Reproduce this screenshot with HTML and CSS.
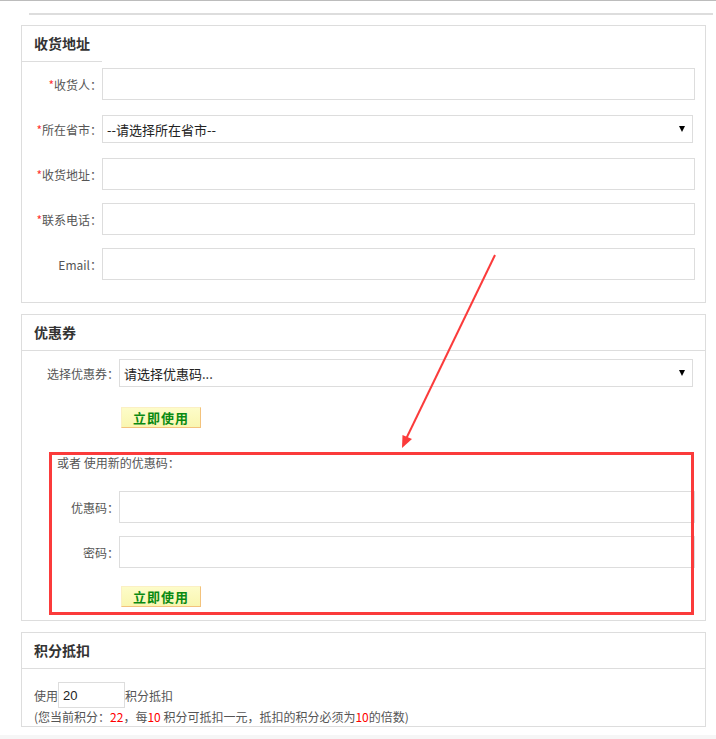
FILE: index.html
```html
<!DOCTYPE html>
<html lang="zh-CN">
<head>
    <meta charset="UTF-8">
    <meta name="viewport" content="width=device-width, initial-scale=1.0">
    <title>订单信息</title>
    <link rel="stylesheet" href="styles.css">
</head>
<body>
    <div class="rule"></div>

    <div class="panel">
        <div class="panel-hd tab"><h3>收货地址</h3></div>
        <div class="panel-bd addr">
            <div class="row">
                <label><em>*</em>收货人：</label>
                <input type="text" class="txt">
            </div>
            <div class="row">
                <label><em>*</em>所在省市：</label>
                <div class="sel-wrap">
                    <select class="sel"><option>--请选择所在省市--</option></select>
                </div>
            </div>
            <div class="row">
                <label><em>*</em>收货地址：</label>
                <input type="text" class="txt">
            </div>
            <div class="row">
                <label><em>*</em>联系电话：</label>
                <input type="text" class="txt">
            </div>
            <div class="row">
                <label>Email：</label>
                <input type="text" class="txt">
            </div>
        </div>
    </div>

    <div class="panel">
        <div class="panel-hd"><h3>优惠券</h3></div>
        <div class="panel-bd coupon">
            <div class="row short">
                <label>选择优惠券：</label>
                <div class="sel-wrap">
                    <select class="sel"><option>请选择优惠码...</option></select>
                </div>
            </div>
            <div class="btn-row"><button type="button" class="use-btn">立即使用</button></div>

            <div class="new-code">
                <p class="tip">或者 使用新的优惠码：</p>
                <div class="row">
                    <label>优惠码：</label>
                    <input type="text" class="txt">
                </div>
                <div class="row">
                    <label>密码：</label>
                    <input type="password" class="txt">
                </div>
                <div class="btn-row last"><button type="button" class="use-btn">立即使用</button></div>
            </div>
        </div>
    </div>

    <div class="panel">
        <div class="panel-hd"><h3>积分抵扣</h3></div>
        <div class="panel-bd points">
            <p class="use-line">使用<input type="text" class="pt" value="20">积分抵扣</p>
            <p class="note">(您当前积分：<span class="red">22</span>，每<span class="red">10</span> 积分可抵扣一元，抵扣的积分必须为<span class="red">10</span>的倍数)</p>
        </div>
    </div>

    <div class="foot"></div>

    <!-- 标注箭头 -->
    <svg class="arrow" width="716" height="739" viewBox="0 0 716 739">
        <line x1="495" y1="254" x2="406" y2="438" stroke="#fb3b3b" stroke-width="2"/>
        <polygon points="402,447 412,438 402.5,434" fill="#fb3b3b"/>
    </svg>
</body>
</html>
```

FILE: styles.css
```css
* {
    margin: 0;
    padding: 0;
    box-sizing: border-box;
}
body {
    font-family: "Noto Sans CJK SC", "Noto Sans", sans-serif;
    font-size: 12px;
    color: #555;
    background-color: #fff;
    border-top: 1px solid #bcbcbc;
    position: relative;
    width: 716px;
    height: 739px;
    overflow: hidden;
}
.rule {
    margin: 12px 3px 0 29px;
    height: 2px;
    background-color: #ddd;
}
.panel {
    margin: 10px 0 0 21px;
    width: 685px;
    border: 1px solid #ddd;
}
.panel + .panel {
    margin-top: 11px;
}
.panel-hd {
    height: 36px;
    border-bottom: 1px solid #ddd;
}
.panel-hd h3 {
    font-size: 14px;
    font-weight: bold;
    color: #333;
    line-height: 35px;
    padding-left: 12px;
}
.panel-hd.tab {
    border-bottom: none;
}
.panel-hd.tab h3 {
    width: 80px;
    height: 36px;
    border-bottom: 1px solid #ddd;
}
.panel-bd {
    padding: 6px 10px 9px 0;
}
.row {
    display: flex;
    align-items: center;
    height: 32px;
    margin-bottom: 13px;
}
.row label {
    flex: 0 0 80px;
    text-align: right;
    white-space: nowrap;
}
.row label em {
    font-style: normal;
    color: #f33;
}
.txt {
    flex: 1;
    height: 32px;
    border: 1px solid #ddd;
    outline: none;
    padding: 0 4px;
    font-size: 13px;
}
.sel-wrap {
    flex: 1;
    margin-right: 2px;
    position: relative;
}
.sel-wrap::after {
    content: "";
    position: absolute;
    right: 8px;
    top: 50%;
    margin-top: -3px;
    border-left: 3px solid transparent;
    border-right: 3px solid transparent;
    border-top: 6px solid #000;
    pointer-events: none;
}
.sel {
    appearance: none;
    -webkit-appearance: none;
    width: 100%;
    height: 28px;
    border: 1px solid #ddd;
    background-color: #fff;
    padding-left: 4px;
    font-family: "Noto Sans CJK SC", sans-serif;
    font-size: 13px;
    color: #222;
    outline: none;
}
.panel-bd.coupon {
    padding-top: 8px;
    padding-bottom: 13px;
}
.coupon .row label {
    flex-basis: 97px;
}
.coupon .row.short {
    height: 28px;
    margin-bottom: 20px;
}
.btn-row {
    display: flex;
    padding-left: 99px;
}
.use-btn {
    width: 80px;
    height: 21px;
    background: linear-gradient(#fdfcc9, #f9f6b0);
    border: 1px solid #fbf0c4;
    border-right-color: #f3c27c;
    border-bottom-color: #f3c27c;
    color: #0a8a12;
    font-family: "Noto Sans CJK SC", sans-serif;
    font-size: 13px;
    font-weight: bold;
    letter-spacing: 1px;
    line-height: 19px;
    cursor: pointer;
}
.new-code {
    margin-top: 26px;
    position: relative;
}
.new-code::after {
    content: "";
    position: absolute;
    top: -2px;
    left: 27px;
    right: 1px;
    bottom: -8px;
    border: 3px solid #fb3b3b;
    pointer-events: none;
}
.tip {
    line-height: 18px;
    padding-left: 35px;
    margin-bottom: 19px;
}
.btn-row.last {
    margin-top: 18px;
}
.panel-bd.points {
    padding: 13px 0 0 12px;
}
.use-line {
    height: 26px;
    display: flex;
    align-items: center;
}
.pt {
    width: 67px;
    height: 26px;
    border: 1px solid #ddd;
    padding-left: 4px;
    font-size: 13px;
    color: #222;
    outline: none;
}
.note {
    line-height: 18px;
}
.red {
    color: #f00;
}
.foot {
    margin-top: 8px;
    height: 10px;
    background-color: #f6f6f6;
}
.arrow {
    position: absolute;
    top: 0;
    left: 0;
    pointer-events: none;
}
```
